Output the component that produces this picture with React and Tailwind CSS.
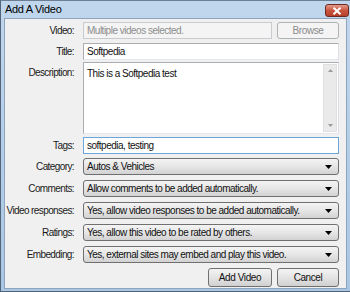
import React from 'react';

const font = { fontFamily: '"Liberation Sans", Arial, sans-serif' };

const Label = ({ children, top }) => (
  <div className={`w-[70px] shrink-0 pr-[1px] text-right text-[10px] tracking-[-0.6px] text-[#1a1a1a] ${top ? 'self-start pt-[3px]' : ''}`}>
    {children}
  </div>
);

const Row = ({ label, children, className = '', top }) => (
  <div className={`flex items-center gap-[8px] ${className}`}>
    <Label top={top}>{label}</Label>
    <div className="flex-1 flex gap-[5px] h-full">{children}</div>
  </div>
);

const TextBox = ({ value, focused }) => (
  <div
    className={`flex-1 h-full flex items-center px-[3px] bg-white border text-[10px] tracking-[-0.5px] text-[#111] ${
      focused ? 'border-[#6aa6dc]' : 'border-[#abadb3] border-b-[#e3e9ef] border-r-[#dbdfe6]'
    }`}
  >
    {value}
  </div>
);

const Select = ({ value }) => (
  <div className="flex-1 h-full flex items-center justify-between pl-[3px] pr-[6px] rounded-[3px] border border-[#707070] bg-gradient-to-b from-[#f4f4f4] via-[#e6e6e6] to-[#d2d2d2] text-[10px] tracking-[-0.5px] text-[#111]">
    <span>{value}</span>
    <svg width="7" height="4" viewBox="0 0 7 4">
      <path d="M0 0h7L3.5 4z" fill="#000" />
    </svg>
  </div>
);

const Button = ({ children, disabled, className = '' }) => (
  <div
    className={`h-full flex items-center justify-center rounded-[3px] border text-[10px] tracking-[-0.4px] ${
      disabled
        ? 'border-[#adb2b5] bg-[#f4f4f4] text-[#8a8a8a]'
        : 'border-[#707070] bg-gradient-to-b from-[#f4f4f4] via-[#e4e4e4] to-[#d0d0d0] text-[#111]'
    } ${className}`}
  >
    {children}
  </div>
);

export default function App() {
  return (
    <div className="w-[350px] h-[292px] bg-white" style={font}>
      <div className="relative w-full h-full flex flex-col bg-gradient-to-b from-[#c0d6ec] to-[#a9c6e4] border border-[#52657a] border-t-[#6d7f93] border-r-0">
        <div className="h-[17px] shrink-0 flex items-center pl-[4px] text-[11px] text-[#000] tracking-[-0.3px]">
          Add A Video
        </div>
        <div className="absolute right-[1px] top-[3px] w-[24px] h-[13px] rounded-[3px] border border-[#6e2a22] bg-gradient-to-b from-[#e39a8a] via-[#c9553f] to-[#b8402b] flex items-center justify-center">
          <svg width="10" height="8" viewBox="0 0 10 8">
            <path d="M1.5 0.8l7 6.4M8.5 0.8l-7 6.4" stroke="#fff" strokeWidth="2" />
          </svg>
        </div>
        <div className="flex-1 mx-[3px] mb-[2px] bg-[#f0f0f0] border border-[#8ea4bc] pt-[3px] pr-[7px] flex flex-col">
          <Row label="Video:" className="h-[17px]">
            <div className="flex-1 h-full flex items-center px-[3px] bg-[#f4f4f4] border border-[#c9cbce] text-[10px] tracking-[-0.5px] text-[#8d8d8d]">
              Multiple videos selected.
            </div>
            <Button disabled className="w-[62px]">Browse</Button>
          </Row>
          <Row label="Title:" className="h-[17px] mt-[4px]">
            <TextBox value="Softpedia" />
          </Row>
          <Row label="Description:" className="h-[72px] mt-[2px]" top>
            <div className="flex-1 h-full flex bg-white border border-[#abadb3] border-b-[#e3e9ef] border-r-[#dbdfe6]">
              <div className="flex-1 px-[3px] pt-[3px] text-[10px] tracking-[-0.5px] text-[#111]">
                This is a Softpedia test
              </div>
              <div className="w-[14px] my-[1px] mr-[1px] bg-[#eaeaea] border border-[#e0e0e0] flex flex-col items-center justify-between py-[4px]">
                <svg width="5" height="3" viewBox="0 0 5 3">
                  <path d="M0 3h5L2.5 0z" fill="#9a9a9a" />
                </svg>
                <svg width="5" height="3" viewBox="0 0 5 3">
                  <path d="M0 0h5L2.5 3z" fill="#9a9a9a" />
                </svg>
              </div>
            </div>
          </Row>
          <Row label="Tags:" className="h-[17px] mt-[3px]">
            <TextBox value="softpedia, testing" focused />
          </Row>
          <Row label="Category:" className="h-[17px] mt-[4px]">
            <Select value="Autos & Vehicles" />
          </Row>
          <Row label="Comments:" className="h-[17px] mt-[5px]">
            <Select value="Allow comments to be added automatically." />
          </Row>
          <Row label="Video responses:" className="h-[17px] mt-[5px]">
            <Select value="Yes, allow video responses to be added automatically." />
          </Row>
          <Row label="Ratings:" className="h-[17px] mt-[5px]">
            <Select value="Yes, allow this video to be rated by others." />
          </Row>
          <Row label="Embedding:" className="h-[17px] mt-[5px]">
            <Select value="Yes, external sites may embed and play this video." />
          </Row>
          <div className="h-[19px] mt-[5px] flex justify-end gap-[5px]">
            <Button className="w-[64px]">Add Video</Button>
            <Button className="w-[62px]">Cancel</Button>
          </div>
        </div>
      </div>
    </div>
  );
}
